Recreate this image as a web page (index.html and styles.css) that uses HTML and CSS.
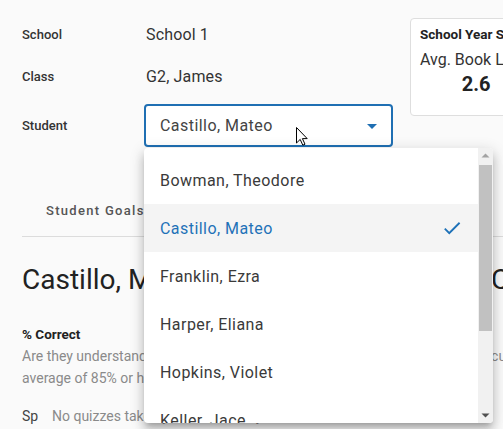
FILE: index.html
```html
<!DOCTYPE html>
<html>
<head>
<meta charset="utf-8">
<link rel="stylesheet" href="styles.css">
</head>
<body>
<div class="page">
  <div class="top">
    <div class="form">
      <div class="row r1"><span class="label">School</span><span class="value">School 1</span></div>
      <div class="row r2"><span class="label">Class</span><span class="value">G2, James</span></div>
      <div class="row r3"><span class="label">Student</span>
        <div class="select">
          <span class="sel-text">Castillo, Mateo</span>
          <svg class="sel-arrow" viewBox="0 0 24 24" width="24" height="24"><path d="M7 10l5 5 5-5z" fill="#1f6fb3"/></svg>
        </div>
      </div>
    </div>
    <div class="card">
      <div class="card-title">School Year Summary</div>
      <div class="stat">
        <div class="stat-label">Avg. Book Level</div>
        <div class="stat-value">2.6</div>
      </div>
    </div>
  </div>
  <div class="tabs">
    <div class="tab">Student Goals</div>
    <div class="tab">Reading Progress</div>
  </div>
  <div class="heading">
    <span class="heading-name">Castillo, Mateo</span>
    <span class="heading-extra">Current Goals</span>
  </div>
  <div class="section">
    <div class="sec-title">% Correct</div>
    <div class="sec-desc">Are they understanding what they read? Students should usually maintain a cumulative average of 85% or higher.</div>
  </div>
  <div class="quiz-row"><span class="quiz-label">Sp</span><span class="quiz-text">No quizzes taken yet this school year.</span></div>
</div>

<div class="menu">
  <ul class="list">
    <li class="item">Bowman, Theodore</li>
    <li class="item selected"><span>Castillo, Mateo</span>
      <svg class="check" viewBox="0 0 24 24" width="22" height="22"><path d="M9 16.17L4.83 12l-1.42 1.41L9 19 21 7l-1.41-1.41z" fill="#1f72b8"/></svg>
    </li>
    <li class="item">Franklin, Ezra</li>
    <li class="item">Harper, Eliana</li>
    <li class="item">Hopkins, Violet</li>
    <li class="item">Keller, Jace</li>
  </ul>
  <div class="scrollbar">
    <div class="sb-btn"><svg viewBox="0 0 15 15" width="15" height="15"><path d="M3.5 9.5h8l-4-4z" fill="#a3a3a3"/></svg></div>
    <div class="sb-track"><div class="sb-thumb"></div></div>
    <div class="sb-btn"><svg viewBox="0 0 15 15" width="15" height="15"><path d="M3.5 5.5h8l-4 4z" fill="#505050"/></svg></div>
  </div>
</div>

<svg class="cursor" viewBox="0 0 12 19" width="12" height="19">
  <path d="M0.5 0.5 L0.5 16 L4.2 12.4 L6.8 18.2 L9 17.2 L6.4 11.6 L11.2 11.6 Z" fill="#fff" stroke="#000" stroke-width="1" stroke-linejoin="round"/>
</svg>
</body>
</html>
```

FILE: styles.css
```css
html, body {
  margin: 0;
  padding: 0;
  background: #fafafa;
  font-family: Roboto, "Liberation Sans", Arial, sans-serif;
  color: #333;
  overflow: hidden;
  width: 503px;
  height: 429px;
}

.page {
  width: 900px;
  padding-left: 22px;
  box-sizing: border-box;
}

.top {
  display: flex;
  align-items: flex-start;
}

.form {
  width: 388px;
  padding-top: 24px;
  display: flex;
  flex-direction: column;
}

.row {
  display: flex;
  align-items: center;
}

.r1 { height: 20px; }
.r2 { height: 20px; margin-top: 22px; }
.r3 { height: 43px; margin-top: 18px; }

.label {
  width: 124px;
  font-size: 13px;
  font-weight: 500;
  color: #333;
}

.value {
  font-size: 16px;
  color: #333;
  letter-spacing: 0.15px;
}

.select {
  margin-left: -2px;
  width: 249px;
  height: 43px;
  box-sizing: border-box;
  border: 2px solid #1f6fb3;
  border-radius: 4px;
  background: #fff;
  display: flex;
  align-items: center;
  padding-left: 14px;
  padding-right: 7px;
}

.sel-text {
  flex: 1;
  font-size: 16px;
  color: #444;
  letter-spacing: 0.45px;
}

.sel-arrow {
  display: block;
  margin-top: 1px;
}

.card {
  margin-top: 18px;
  width: 160px;
  height: 98px;
  box-sizing: border-box;
  background: #fff;
  border: 1px solid #dedede;
  border-radius: 4px;
  padding: 7px 9px;
  flex-shrink: 0;
}

.card-title {
  font-size: 13.5px;
  font-weight: 700;
  color: #222;
  white-space: nowrap;
}

.stat {
  display: inline-block;
  text-align: center;
  margin-top: 8px;
}

.stat-label {
  font-size: 16px;
  color: #333;
  white-space: nowrap;
}

.stat-value {
  font-size: 20px;
  font-weight: 700;
  color: #222;
  margin-top: 3px;
}

.tabs {
  margin-top: 39px;
  display: flex;
  border-bottom: 1px solid #dcdcdc;
}

.tab {
  padding: 0 24px;
  height: 50px;
  line-height: 50px;
  font-size: 13px;
  font-weight: 500;
  letter-spacing: 1.3px;
  color: #555;
}

.heading {
  margin-top: 25px;
  display: flex;
  font-size: 28px;
  font-weight: 400;
  color: #222;
  line-height: 36px;
  white-space: nowrap;
}

.heading-name {
  width: 469px;
  flex-shrink: 0;
}

.section {
  margin-top: 26px;
  width: 545px;
}

.sec-title {
  font-size: 13.5px;
  font-weight: 700;
  color: #222;
  line-height: 21px;
}

.sec-desc {
  font-size: 14px;
  color: #8a8a8a;
  line-height: 22px;
}

.quiz-row {
  margin-top: 17px;
  display: flex;
  font-size: 14px;
  line-height: 20px;
}

.quiz-label {
  width: 30px;
  color: #444;
}

.quiz-text {
  color: #8a8a8a;
}

.menu {
  position: absolute;
  left: 144px;
  top: 148px;
  width: 349px;
  height: 275px;
  background: #fff;
  border-radius: 4px;
  box-shadow: 0 5px 5px -3px rgba(0,0,0,0.2), 0 8px 10px 1px rgba(0,0,0,0.14), 0 3px 14px 2px rgba(0,0,0,0.12);
  display: flex;
  overflow: hidden;
}

.list {
  list-style: none;
  margin: 0;
  padding: 8px 0 0;
  flex: 1;
  overflow: hidden;
}

.item {
  height: 48px;
  padding: 0 15px 0 16px;
  display: flex;
  align-items: center;
  justify-content: space-between;
  font-size: 16px;
  letter-spacing: 0.45px;
  color: #3a3a3a;
}

.item.selected {
  background: #f4f4f4;
  color: #1f72b8;
}

.check {
  display: block;
}

.scrollbar {
  width: 15px;
  background: #f1f1f1;
  display: flex;
  flex-direction: column;
}

.sb-btn {
  height: 15px;
}

.sb-btn svg {
  display: block;
}

.sb-track {
  flex: 1;
  padding-top: 2px;
}

.sb-thumb {
  margin: 0 1px;
  height: 166px;
  background: #c1c1c1;
}

.cursor {
  position: absolute;
  left: 296px;
  top: 127px;
}
```
